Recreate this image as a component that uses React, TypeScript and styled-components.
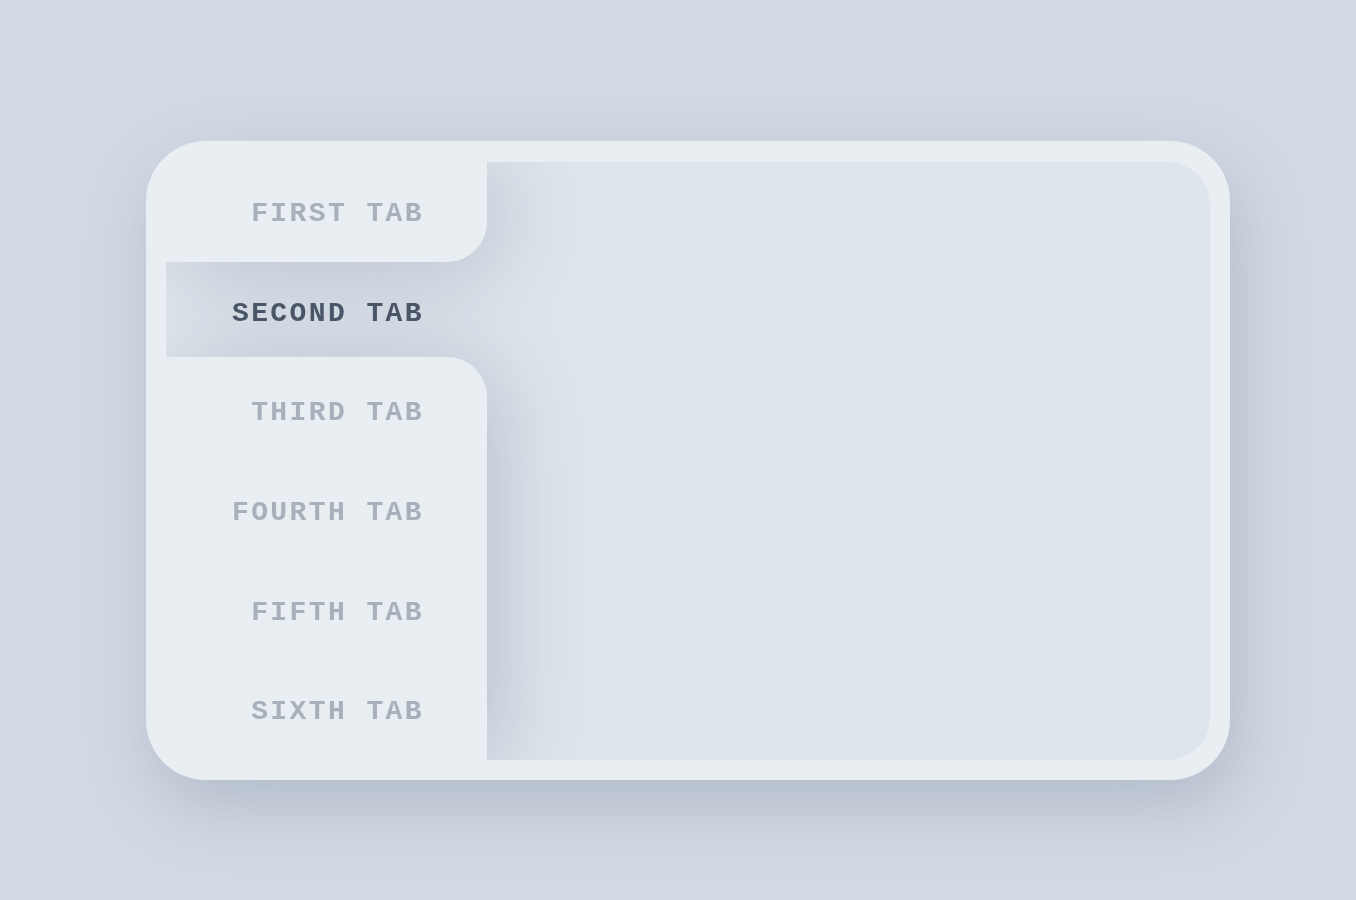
import React, { useState } from 'react';
import styled, { createGlobalStyle } from 'styled-components';

const GlobalStyle = createGlobalStyle`
  html, body {
    margin: 0;
    padding: 0;
    background: #d3dae4;
  }
  body {
    font-family: "Courier New", Courier, "Nimbus Mono PS", FreeMono, "Liberation Mono", monospace;
  }
`;

const tabs = ['First Tab', 'Second Tab', 'Third Tab', 'Fourth Tab', 'Fifth Tab', 'Sixth Tab'];

const App = (): JSX.Element => {
  const [active, setActive] = useState(1);

  return (
    <>
      <GlobalStyle />
      <StyledPage>
        <StyledCard>
          <StyledInner>
            <StyledTabList role="tablist">
              {tabs.map((tab, i) => (
                <StyledTab
                  key={i}
                  role="tab"
                  aria-selected={i === active}
                  $active={i === active}
                  $beforeActive={i === active - 1}
                  $afterActive={i === active + 1}
                  onClick={() => setActive(i)}
                >
                  {tab}
                </StyledTab>
              ))}
            </StyledTabList>
            <StyledPanel role="tabpanel" />
          </StyledInner>
        </StyledCard>
      </StyledPage>
    </>
  );
};

export default App;

const StyledPage = styled.main`
  min-height: 900px;
  box-sizing: border-box;
  padding: 141px 0 0 146px;
`;

const StyledCard = styled.section`
  width: 1084px;
  height: 639px;
  box-sizing: border-box;
  padding: 21px 20px 20px 20px;
  border-radius: 60px;
  background: #e9eef3;
  box-shadow: 8px 26px 70px rgba(100, 116, 139, 0.3);
`;

const StyledInner = styled.div`
  display: flex;
  height: 100%;
  border-radius: 0 42px 42px 0;
  background: #dfe5ec;
  overflow: hidden;
`;

const StyledTabList = styled.div`
  display: flex;
  flex-direction: column;
  width: 321px;
  flex-shrink: 0;
  position: relative;
  z-index: 1;
  filter: drop-shadow(14px 8px 46px rgba(100, 116, 139, 0.32));
`;

const StyledTab = styled.button<{ $active: boolean; $beforeActive: boolean; $afterActive: boolean }>`
  flex: 1 1 0;
  display: flex;
  align-items: center;
  justify-content: flex-end;
  padding: ${({ $afterActive }) => ($afterActive ? '7px 63px 0 0' : '3px 63px 0 0')};
  margin: ${({ $afterActive }) => ($afterActive ? '-4px 0 0 0' : '0')};
  border: 0;
  outline: 0;
  cursor: pointer;
  background: ${({ $active }) => ($active ? 'transparent' : '#e9eef3')};
  border-radius: ${({ $beforeActive, $afterActive }) =>
    $beforeActive ? '0 0 40px 0' : $afterActive ? '0 40px 0 0' : '0'};
  font-family: "Courier New", Courier, "Nimbus Mono PS", FreeMono, "Liberation Mono", monospace;
  font-weight: 700;
  font-size: 28px;
  letter-spacing: 2.4px;
  text-transform: uppercase;
  color: ${({ $active }) => ($active ? '#4a5568' : '#a8b0bc')};
`;

const StyledPanel = styled.div`
  flex: 1;
`;
